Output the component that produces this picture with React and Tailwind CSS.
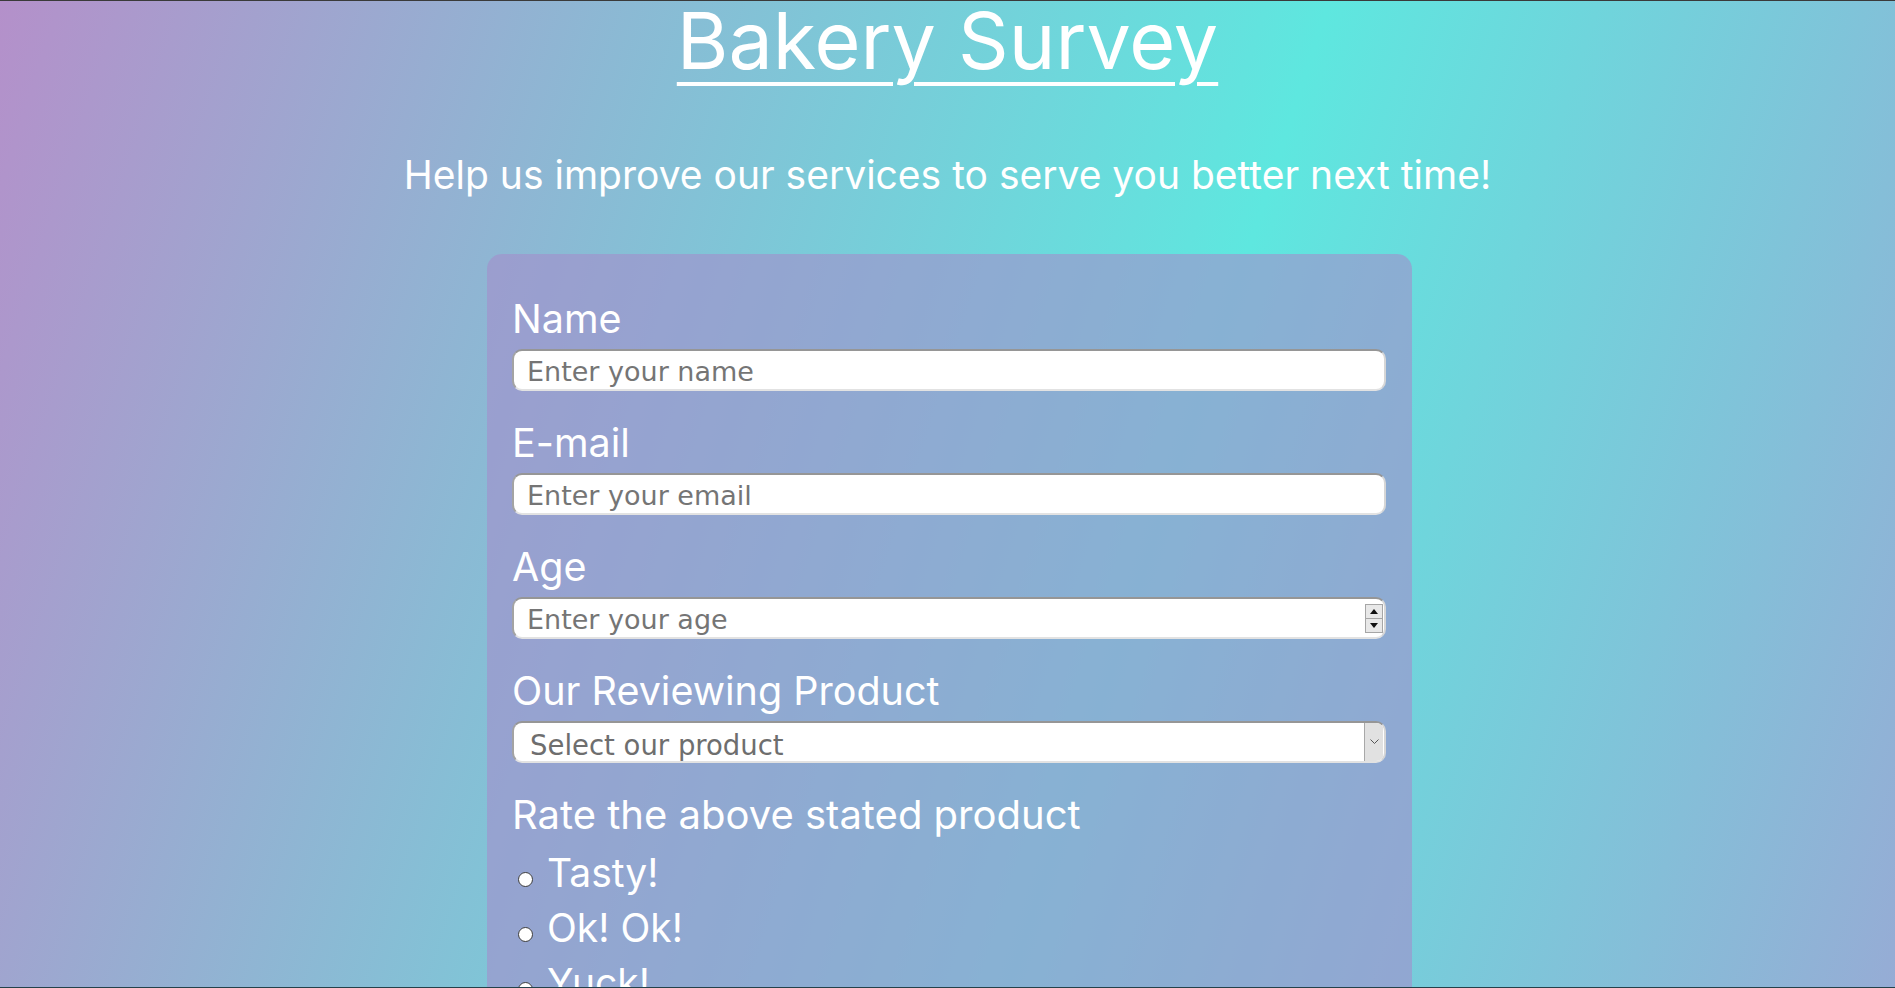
import { useState } from "react";

const fieldBox =
  "h-[42px] w-full rounded-[10px] border-2 border-t-[#969696] border-l-[#a3a3a3] border-r-[#d6d6d6] border-b-[#e2e2e2] bg-white";

const inputText =
  "font-['DejaVu_Sans',sans-serif] text-[27px] text-[#333] placeholder:text-[#757575] outline-none";

const Field = ({ label, children }) => (
  <div className="mb-[30px]">
    <label className="mb-[8px] block text-[39.5px] leading-[44px]">{label}</label>
    {children}
  </div>
);

const App = () => {
  const [rating, setRating] = useState("");

  return (
    <div className="h-screen w-full overflow-hidden border-t border-b border-t-[#3a3a3a] border-b-[#24414a] bg-[linear-gradient(108deg,#b490ca_0%,#5ee7df_60%,#96acd5_100%)] font-['Inter',sans-serif] font-normal text-white">
      <header className="text-center">
        <h1 className="text-[79px] leading-[79px] underline decoration-[4px] underline-offset-[13px]">
          Bakery Survey
        </h1>
        <p className="mt-[71px] text-[39px] leading-[47px]">
          Help us improve our services to serve you better next time!
        </p>
      </header>

      <form className="mx-auto mt-[56px] w-[925px] translate-x-[2px] rounded-[15px] bg-[#a38ecc]/60 pl-[25px] pr-[26px] pt-[43px] pb-[40px]">
        <Field label="Name">
          <input
            type="text"
            placeholder="Enter your name"
            className={`${fieldBox} ${inputText} block px-[13px] pt-[2px]`}
          />
        </Field>

        <Field label="E-mail">
          <input
            type="email"
            placeholder="Enter your email"
            className={`${fieldBox} ${inputText} block px-[13px] pt-[2px]`}
          />
        </Field>

        <Field label="Age">
          <div className={`${fieldBox} flex items-center pr-[1px]`}>
            <input
              type="text"
              placeholder="Enter your age"
              className={`${inputText} h-full min-w-0 flex-1 bg-transparent px-[13px] pt-[2px]`}
            />
            <div className="flex h-[29px] w-[18px] flex-col border border-[#a6a6a6] bg-[#e8e8e8]">
              <div className="flex flex-1 items-center justify-center border-b border-[#a6a6a6]">
                <svg width="8" height="5" viewBox="0 0 8 5">
                  <path d="M0 5 L4 0 L8 5 Z" fill="#111" />
                </svg>
              </div>
              <div className="flex flex-1 items-center justify-center">
                <svg width="8" height="5" viewBox="0 0 8 5">
                  <path d="M0 0 L8 0 L4 5 Z" fill="#111" />
                </svg>
              </div>
            </div>
          </div>
        </Field>

        <Field label="Our Reviewing Product">
          <div className={`${fieldBox} flex overflow-hidden`}>
            <select
              defaultValue=""
              className="h-full min-w-0 flex-1 appearance-none bg-transparent pl-[16px] pt-[2px] font-['DejaVu_Sans',sans-serif] text-[27.5px] text-[#6e6e6e] outline-none"
            >
              <option value="" disabled>
                Select our product
              </option>
              <option>Cakes</option>
              <option>Pastries</option>
              <option>Bread</option>
            </select>
            <div className="mr-[1px] flex w-[19px] items-center justify-center border-l border-[#a8a8a8] bg-[#e1e1e1]">
              <svg width="9" height="6" viewBox="0 0 9 6">
                <path d="M0.5 0.5 L4.5 4.5 L8.5 0.5" fill="none" stroke="#555" strokeWidth="1" />
              </svg>
            </div>
          </div>
        </Field>

        <div className="mt-[6px]">
          <p className="mb-[9px] text-[40px] leading-[44px]">Rate the above stated product</p>
          {["Tasty!", "Ok! Ok!", "Yuck!"].map((opt) => (
            <label key={opt} className="flex h-[55px] items-center text-[39px]">
              <input
                type="radio"
                name="rating"
                value={opt}
                checked={rating === opt}
                onChange={() => setRating(opt)}
                className="ml-[6px] mr-[14px] mt-[12px] h-[15px] w-[15px] appearance-none rounded-full border border-[#3c3c3c] bg-white checked:bg-[#3b82f6]"
              />
              {opt}
            </label>
          ))}
        </div>
      </form>
    </div>
  );
};

export default App;
